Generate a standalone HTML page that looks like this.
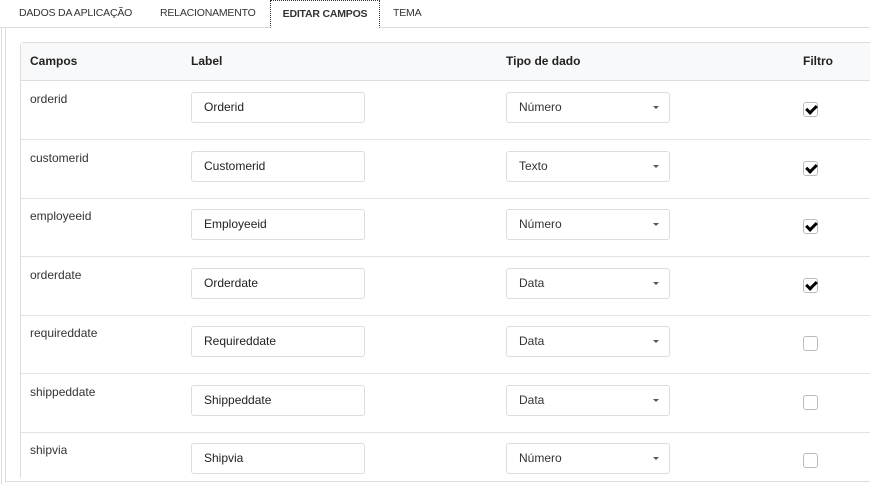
<!DOCTYPE html>
<html><head><style>
html,body{margin:0;padding:0;overflow:hidden}
body{width:870px;height:484px;background:#fff;font-family:"Liberation Sans",sans-serif;color:#333}
#wrap{position:relative;width:870px;height:484px;overflow:hidden}
.tabs{position:absolute;left:0;top:0;width:870px;height:27px;border-bottom:1px solid #ddd}
.tab{position:absolute;top:0;height:27px;line-height:27px;font-size:10.5px;color:#333;white-space:nowrap;letter-spacing:-0.2px}
.act{border:1px dotted #333;border-bottom:1px solid #fff;background:#fff;font-weight:bold;height:28px;box-sizing:border-box;line-height:26px;text-align:center}
.lb{position:absolute;left:1px;top:28px;width:1px;height:456px;background:#ddd}
.panel{position:absolute;left:5px;top:27px;width:870px;height:455px;border-left:1px solid #ddd;border-bottom:1px solid #ddd;box-sizing:border-box}
.box{position:absolute;left:20px;top:42px;width:860px;height:436px;border:1px solid #ddd;border-bottom:none;border-radius:4px 4px 0 0;box-sizing:border-box}
.hdr{position:absolute;left:21px;top:43px;width:850px;height:38px;background:#f8f9fa;border-bottom:1px solid #ddd;box-sizing:border-box}
.h{position:absolute;top:54px;font-size:12px;font-weight:bold;color:#222}
.row{position:absolute;left:21px;width:850px;height:59px;border-bottom:1px solid #e3e3e3;box-sizing:border-box}
.name{position:absolute;left:9px;top:11px;font-size:12px;color:#333}
.inp{position:absolute;left:170px;top:11px;width:174px;height:31px;border:1px solid #ddd;border-radius:3px;box-sizing:border-box;font-size:12px;padding-left:12px;line-height:29px;color:#222}
.sel{position:absolute;left:485px;top:11px;width:164px;height:31px;border:1px solid #ddd;border-radius:3px;box-sizing:border-box;font-size:12px;padding-left:12px;line-height:28px;color:#333}
.sel:after{content:"";position:absolute;right:10px;top:13px;border-left:3px solid transparent;border-right:3px solid transparent;border-top:3px solid #555}
.cb{position:absolute;left:782px;top:21px;width:15px;height:15px;border:1px solid #bbb;border-radius:3px;box-sizing:border-box;background:#fff}
.cb.on:after{content:"";position:absolute;left:4px;top:0px;width:4px;height:8px;border:solid #000;border-width:0 3px 3px 0;transform:rotate(45deg)}
</style></head><body><div id="wrap">
<div class="tabs">
<div class="tab" style="left:19px">DADOS DA APLICAÇÃO</div>
<div class="tab" style="left:160px">RELACIONAMENTO</div>
<div class="tab act" style="left:270px;width:110px">EDITAR CAMPOS</div>
<div class="tab" style="left:393px">TEMA</div>
</div>
<div class="lb"></div>
<div class="panel"></div>
<div class="box"></div>
<div class="hdr"></div>
<div class="h" style="left:30px">Campos</div>
<div class="h" style="left:191px">Label</div>
<div class="h" style="left:506px">Tipo de dado</div>
<div class="h" style="left:803px">Filtro</div>

<div class="row" style="top:81px"><div class="name">orderid</div><div class="inp">Orderid</div><div class="sel">Número</div><div class="cb on"></div></div>
<div class="row" style="top:140px"><div class="name">customerid</div><div class="inp">Customerid</div><div class="sel">Texto</div><div class="cb on"></div></div>
<div class="row" style="top:198px"><div class="name">employeeid</div><div class="inp">Employeeid</div><div class="sel">Número</div><div class="cb on"></div></div>
<div class="row" style="top:257px"><div class="name">orderdate</div><div class="inp">Orderdate</div><div class="sel">Data</div><div class="cb on"></div></div>
<div class="row" style="top:315px"><div class="name">requireddate</div><div class="inp">Requireddate</div><div class="sel">Data</div><div class="cb"></div></div>
<div class="row" style="top:374px"><div class="name">shippeddate</div><div class="inp">Shippeddate</div><div class="sel">Data</div><div class="cb"></div></div>
<div class="row" style="top:432px;border-bottom:none;height:46px"><div class="name">shipvia</div><div class="inp">Shipvia</div><div class="sel">Número</div><div class="cb"></div></div>
</div></body></html>
